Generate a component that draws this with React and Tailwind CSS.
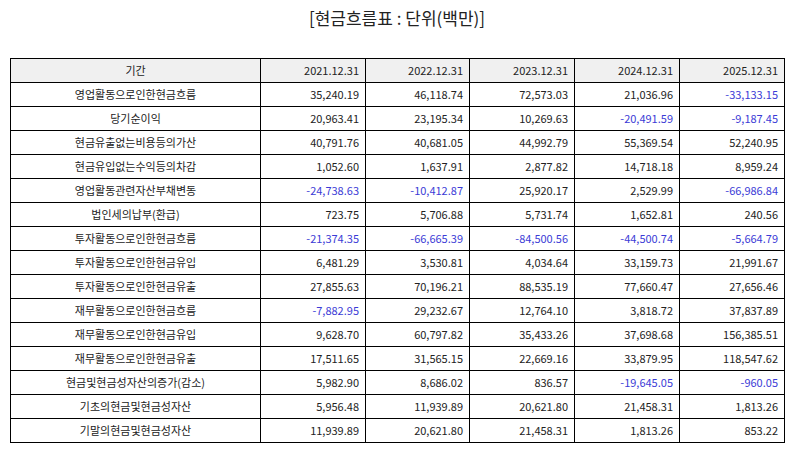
export default function App() {
  const rows = [
    ['영업활동으로인한현금흐름', '35,240.19', '46,118.74', '72,573.03', '21,036.96', '-33,133.15'],
    ['당기순이익', '20,963.41', '23,195.34', '10,269.63', '-20,491.59', '-9,187.45'],
    ['현금유출없는비용등의가산', '40,791.76', '40,681.05', '44,992.79', '55,369.54', '52,240.95'],
    ['현금유입없는수익등의차감', '1,052.60', '1,637.91', '2,877.82', '14,718.18', '8,959.24'],
    ['영업활동관련자산부채변동', '-24,738.63', '-10,412.87', '25,920.17', '2,529.99', '-66,986.84'],
    ['법인세의납부(환급)', '723.75', '5,706.88', '5,731.74', '1,652.81', '240.56'],
    ['투자활동으로인한현금흐름', '-21,374.35', '-66,665.39', '-84,500.56', '-44,500.74', '-5,664.79'],
    ['투자활동으로인한현금유입', '6,481.29', '3,530.81', '4,034.64', '33,159.73', '21,991.67'],
    ['투자활동으로인한현금유출', '27,855.63', '70,196.21', '88,535.19', '77,660.47', '27,656.46'],
    ['재무활동으로인한현금흐름', '-7,882.95', '29,232.67', '12,764.10', '3,818.72', '37,837.89'],
    ['재무활동으로인한현금유입', '9,628.70', '60,797.82', '35,433.26', '37,698.68', '156,385.51'],
    ['재무활동으로인한현금유출', '17,511.65', '31,565.15', '22,669.16', '33,879.95', '118,547.62'],
    ['현금및현금성자산의증가(감소)', '5,982.90', '8,686.02', '836.57', '-19,645.05', '-960.05'],
    ['기초의현금및현금성자산', '5,956.48', '11,939.89', '20,621.80', '21,458.31', '1,813.26'],
    ['기말의현금및현금성자산', '11,939.89', '20,621.80', '21,458.31', '1,813.26', '853.22'],
  ]
  const years = ['2021.12.31', '2022.12.31', '2023.12.31', '2024.12.31', '2025.12.31']

  return (
    <div className="w-[794px] h-[452px] bg-white text-[#222] font-['Noto_Sans_CJK_KR','Noto_Sans',sans-serif]">
      <div className="h-[58px] flex justify-center pt-[3px]">
        <h1 className="text-[17px] leading-[30px] font-normal">[현금흐름표 : 단위(백만)]</h1>
      </div>

      <table className="ml-[10px] w-[774px] table-fixed border-collapse text-[11px]">
        <colgroup>
          <col className="w-[250px]" />
          <col className="w-[105px]" />
          <col className="w-[104px]" />
          <col className="w-[105px]" />
          <col className="w-[105px]" />
          <col className="w-[105px]" />
        </colgroup>
        <thead>
          <tr className="bg-[#f0f0f0]">
            <th className="h-[24px] p-0 border border-black font-normal text-center">기간</th>
            {years.map((y) => (
              <th key={y} className="h-[24px] p-0 pr-[6px] border border-black font-normal text-right">
                {y}
              </th>
            ))}
          </tr>
        </thead>
        <tbody>
          {rows.map((r) => (
            <tr key={r[0]}>
              <td className="h-[24px] p-0 border border-black text-center">{r[0]}</td>
              {r.slice(1).map((v, i) => (
                <td
                  key={i}
                  className={`h-[24px] p-0 pr-[6px] border border-black text-right ${
                    v.startsWith('-') ? 'text-[#3b3bd6]' : ''
                  }`}
                >
                  {v}
                </td>
              ))}
            </tr>
          ))}
        </tbody>
      </table>
    </div>
  )
}
